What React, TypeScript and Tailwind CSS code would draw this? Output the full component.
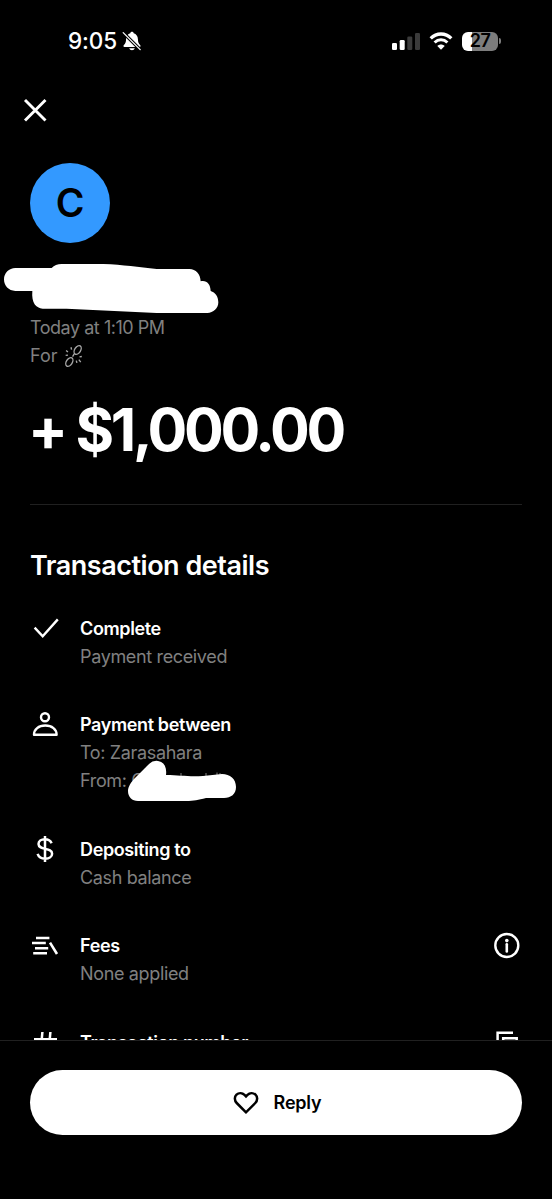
import React from "react";

const CheckIcon = () => (
  <svg className="h-[30px] w-[30px]" viewBox="0 0 30 30" fill="none" stroke="currentColor" strokeWidth="2.4">
    <path d="M4.6 13.6l8.1 8.6L27.8 5.4" />
  </svg>
);

const PersonIcon = () => (
  <svg className="h-[30px] w-[30px]" viewBox="0 0 30 30" fill="none" stroke="currentColor" strokeWidth="2.4">
    <circle cx="15" cy="7.3" r="4" />
    <path d="M4 24.7C4 19.3 8.6 15.5 15.3 15.5s11.3 3.800 11.3 9.2z" strokeLinejoin="round" />
  </svg>
);

const DollarIcon = () => (
  <svg className="h-[30px] w-[30px]" viewBox="0 0 30 30" fill="none" stroke="currentColor" strokeWidth="2.5">
    <path d="M15 1v26M21.6 8.2C20.4 5.6 18 4.3 15 4.3c-3.8 0-6.5 1.9-6.5 4.7 0 6.6 13.6 3.2 13.6 9.7 0 3-2.9 5-6.9 5-3.8 0-6.5-1.6-7.6-4.8" />
  </svg>
);

const FeesIcon = () => (
  <svg className="h-[30px] w-[30px]" viewBox="0 0 30 30" fill="none" stroke="currentColor" strokeWidth="2.6">
    <path d="M6 7h13.4M2 12h13.8M5 17.3h13.2M3.2 22.3H17M20 11.6l7 11.4" />
  </svg>
);

const HashIcon = () => (
  <svg className="h-[30px] w-[30px]" viewBox="0 0 30 30" fill="none" stroke="currentColor" strokeWidth="2.5">
    <path d="M12.4 4l-2 22M20.4 4l-2 22M4 11.2h23M3 19h23" />
  </svg>
);

const InfoIcon = () => (
  <svg className="h-[30px] w-[30px]" viewBox="0 0 30 30" fill="none" stroke="currentColor" strokeWidth="2.4">
    <circle cx="14.8" cy="14.5" r="11.5" />
    <circle cx="14.8" cy="9.6" r="1.8" fill="currentColor" stroke="none" />
    <path d="M14.8 13.2v7.3" strokeWidth="2.6" strokeLinecap="round" />
  </svg>
);

const CopyIcon = () => (
  <svg className="h-[30px] w-[30px]" viewBox="0 0 30 30" fill="none" stroke="currentColor" strokeWidth="2.5">
    <path d="M21 4.7H5.6v17" />
    <path d="M11.2 10.2h13.5v15H11.2z" />
  </svg>
);

const StatusBar = () => (
  <div className="flex h-[82px] items-center justify-between pl-[68px] pr-[51px]">
    <div className="flex items-center">
      <span className="w-[50px] whitespace-nowrap text-[22.5px] font-medium leading-7 tracking-[-0.1px]">9:05</span>
      <svg className="ml-[4px] h-[20px] w-[20px]" viewBox="0 0 20 20" fill="currentColor">
        <path d="M10 .8c-.9 0-1.6.6-1.7 1.4C5.7 3 4.2 5.2 4.1 8c-.1 3.6-.8 4.7-2.2 6-.9.9-.5 1.9.6 1.9h15c1.100 0 1.5-1 .6-1.9-1.4-1.3-2.1-2.4-2.2-6-.1-2.8-1.6-5-4.2-5.8C11.6 1.4 10.9.8 10 .8zM7.2 17.2h5.6c-.4 1.3-1.5 2-2.800 2s-2.4-.7-2.800-2z" />
        <path d="M1.2 1.6l17 17" stroke="#000" strokeWidth="3.4" />
        <path d="M1.2 1.6l17 17" stroke="currentColor" strokeWidth="1.3" strokeLinecap="round" />
      </svg>
    </div>
    <div className="flex items-center">
      <svg className="h-[20px] w-[28px]" viewBox="0 0 28 20" fill="currentColor">
        <rect x="0" y="12" width="5" height="7" rx="1.3" />
        <rect x="7.7" y="9" width="5" height="10" rx="1.3" />
        <rect x="15.3" y="5.5" width="5" height="13.5" rx="1.3" fill="#3b3b3b" />
        <rect x="23" y="2" width="5" height="17" rx="1.3" fill="#3b3b3b" />
      </svg>
      <svg className="ml-[9px] h-[20px] w-[24px]" viewBox="0 0 24 20" fill="none" stroke="currentColor">
        <path d="M1.7 7.4c5.9-5.9 14.7-5.9 20.6 0" strokeWidth="3.3" />
        <path d="M5.6 11.5c3.7-3.6 9.1-3.6 12.8 0" strokeWidth="3" />
        <path d="M12 18.7l-3.7-3.8c2.1-2 5.3-2 7.4 0z" fill="currentColor" stroke="none" />
      </svg>
      <div className="ml-[9px] flex h-[19px] w-[36px] items-center justify-center rounded-[6px] bg-linear-to-r from-white from-28% to-[#7d7d7d] to-28% text-[18px] font-semibold leading-none tracking-[-0.5px] text-black">
        27
      </div>
      <div className="ml-[1px] h-[6px] w-[2px] rounded-r-full bg-[#7d7d7d]" />
    </div>
  </div>
);

const BrokenChain = () => (
  <svg className="h-[24px] w-[19px]" viewBox="0 0 20 26" fill="none" stroke="#a8a8a8" strokeWidth="1.5">
    <ellipse cx="14.5" cy="6.5" rx="3.2" ry="5.2" transform="rotate(32 14.5 6.5)" />
    <ellipse cx="5.5" cy="19.5" rx="3.2" ry="5.2" transform="rotate(32 5.5 19.5)" />
    <path d="M2 7l2 1.6M7.3 3.5l.6 2.5M1.5 12.3l2.5-.3M13 18l.7 2.5M15.8 17l2 2.7M16.5 14l2.5-.4M10.8 10.8L9 13.6" />
  </svg>
);

type DetailProps = {
  icon: React.ReactNode;
  title: string;
  children?: React.ReactNode;
  action?: React.ReactNode;
};

const Detail = ({ icon, title, children, action }: DetailProps) => (
  <div className="flex items-start">
    <div className="-mt-px w-[50px] shrink-0">{icon}</div>
    <div className="flex-1 text-[18px] leading-7">
      <h3 className="font-semibold tracking-[-0.37px]">{title}</h3>
      <div className="tracking-[-0.35px] text-[#808080]">{children}</div>
    </div>
    {action && <button className="-mt-px block">{action}</button>}
  </div>
);

const App = () => {
  return (
    <div className="flex h-[1199px] w-[552px] flex-col overflow-hidden bg-black font-['Inter',sans-serif] text-white">
      <StatusBar />

      <main className="min-h-0 flex-1 overflow-hidden px-[30px]">
        <button className="-ml-[7px] mt-[16px] block">
          <svg className="h-[24px] w-[24px]" viewBox="0 0 24 24" fill="none" stroke="currentColor" strokeWidth="2.9">
            <path d="M2 2l20.5 20.5M22.5 2L2 22.5" />
          </svg>
        </button>

        <div className="mt-[41px] flex h-[80px] w-[80px] items-center justify-center rounded-full bg-[#3399ff] pb-px text-[39px] font-semibold leading-none text-black">
          C
        </div>

        {/* Hidden sender name */}
        <svg className="-ml-[30px] mt-[17px] block h-[54px] w-[220px]" viewBox="0 330 660 162" fill="#fff">
          <path d="M46 354H155Q166 342 185 342H310C370 344 415 352 470 357H568C588 357 601 372 602 394C620 390 631 402 632 423C646 427 655 440 655 457C655 475 640 489 622 489H470L200 476H128C108 474 94 460 97 423H46C26 422 12 408 12 388C12 369 27 354 46 354Z" />
        </svg>

        <div className="text-[18px] leading-7 text-[#808080]">
          <p className="tracking-[-0.47px]">Today at 1:10 PM</p>
          <p className="flex items-center gap-[7px]">
            For <BrokenChain />
          </p>
        </div>

        <h1 className="-ml-[2px] mt-[30px] whitespace-nowrap text-[59px] font-bold leading-[60px] tracking-[-3.3px]">
          + $1,000.00
        </h1>

        <div className="mt-[44px] h-px bg-[#202020]" />

        <h2 className="mt-[43px] text-[27px] font-semibold leading-9 tracking-[-0.48px]">Transaction details</h2>

        <div className="mt-[30.6px] flex flex-col gap-[40.3px]">
          <Detail icon={<CheckIcon />} title="Complete">
            Payment received
          </Detail>
          <Detail icon={<PersonIcon />} title="Payment between">
            <p>To: Zarasahara</p>
            <div className="relative pb-px">
              From: C
              <svg className="absolute -top-[7px] left-[46px] h-[44px] w-[112px]" viewBox="0 0 112 44">
                <path d="M55 13v5M80 13v5M91 12.5v5M94 13v5" stroke="#555" strokeWidth="1.5" />
                <path d="M2 31C2 27 5 22 9 18L21 6Q26 0 32 1C38 2 41 7 40 15C54 15 62 17 77 16L96 14C104 14 110 19 110 27C110 34 105 38 98 38H80C72 40 68 41 60 41H12C6 41 2 37 2 31Z" fill="#fff" />
              </svg>
            </div>
          </Detail>
          <Detail icon={<DollarIcon />} title="Depositing to">
            Cash balance
          </Detail>
          <Detail icon={<FeesIcon />} title="Fees" action={<InfoIcon />}>
            None applied
          </Detail>
          <Detail icon={<HashIcon />} title="Transaction number" action={<CopyIcon />} />
        </div>
      </main>

      <footer className="h-[159px] shrink-0 border-t border-[#202020] px-[30px] pt-[29px]">
        <button className="flex h-[65px] w-full items-center justify-center gap-[15px] rounded-full bg-white pl-[2px] pt-px text-black">
          <svg className="h-[26px] w-[26px]" viewBox="0 0 26 26" fill="none" stroke="currentColor" strokeWidth="2.5">
            <path d="M13 22.3L3.7 13C1.3 10.5 1.3 6.8 3.5 4.7c2.3-2.2 5.8-2 8 .2L13 6.4l1.5-1.5c2.2-2.2 5.7-2.4 8-.2 2.2 2.1 2.2 5.8-.2 8.3z" />
          </svg>
          <span className="text-[18px] font-semibold leading-7 tracking-[-0.2px]">Reply</span>
        </button>
      </footer>
    </div>
  );
};

export default App;
